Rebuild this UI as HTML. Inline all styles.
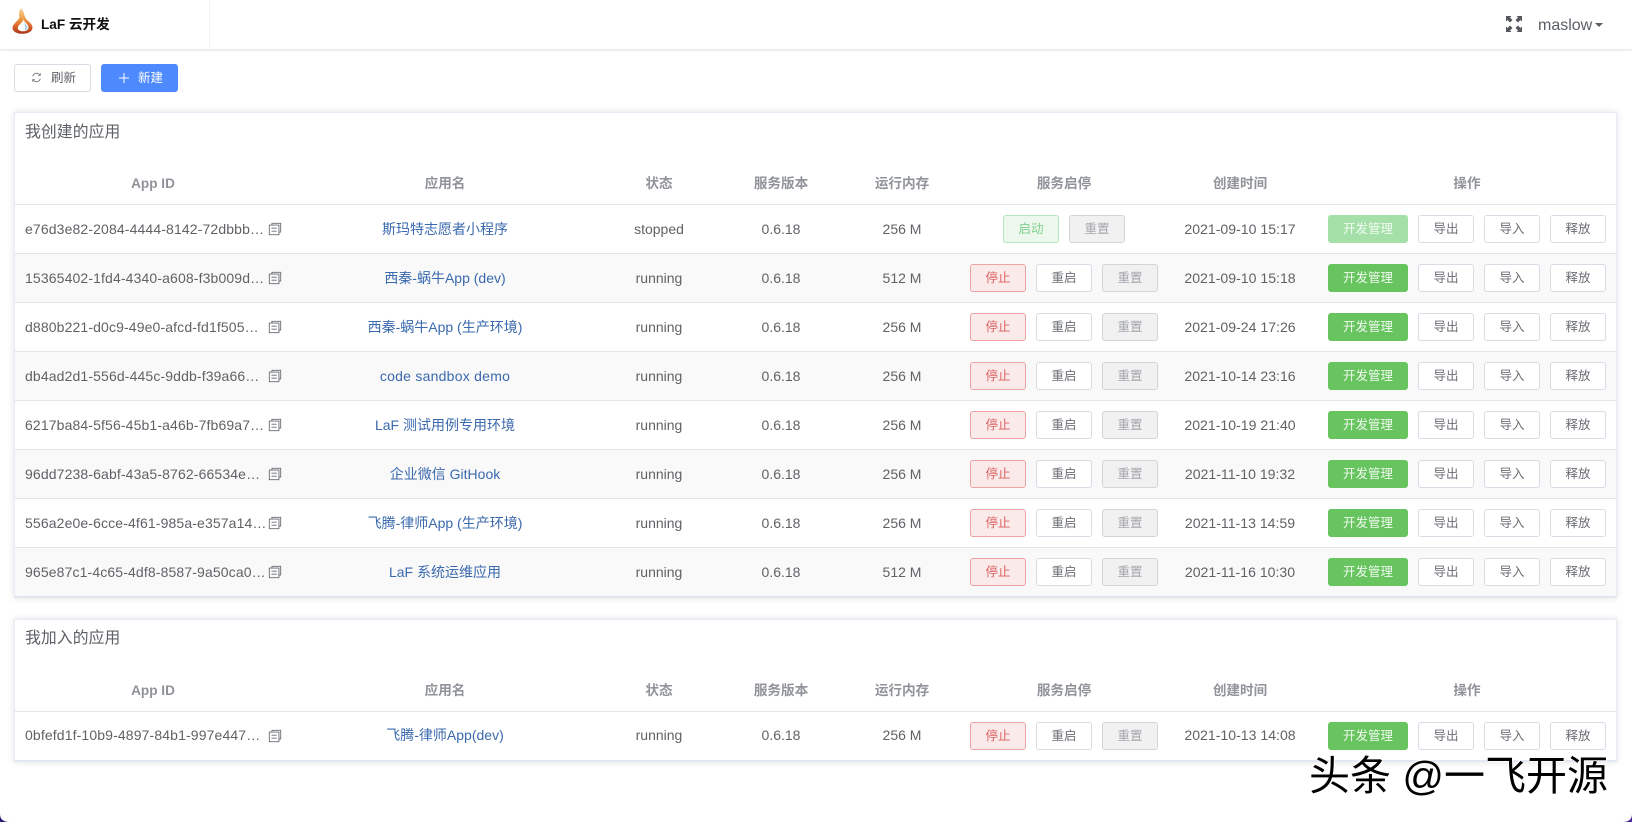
<!DOCTYPE html>
<html lang="zh"><head><meta charset="utf-8"><title>LaF 云开发</title>
<style>
html,body{margin:0;padding:0;width:1632px;height:822px;overflow:hidden;background:#fff}
body{position:relative;font-family:"Liberation Sans","Noto Sans CJK SC",sans-serif;color:#606266;font-size:14px}
.abs{position:absolute}
.nav{position:absolute;left:0;top:0;width:1632px;height:49px;background:#fff;box-shadow:0 1px 3px rgba(0,21,41,.14)}
.card{position:absolute;left:14px;width:1603px;box-sizing:border-box;background:#fff;border:1px solid #e6ebf5;border-bottom:2px solid #e2e7f2;box-shadow:0 0 7px rgba(0,0,0,.12)}
.title{position:absolute;left:25px;font-size:15.8px;line-height:24px;color:#5c6066;letter-spacing:.1px}
.h{position:absolute;left:15px;width:1601px;height:49px;box-sizing:border-box;border-bottom:1px solid #dfe6ec;background:#fff}
.h span{position:absolute;top:4px;line-height:48px;text-align:center;font-weight:bold;color:#909399;font-size:13.6px}
.r{position:absolute;left:15px;width:1601px;height:49px;box-sizing:border-box;border-bottom:1px solid #dfe6ec;background:#fff}
.r.z{background:#f9f9f9}
.r.l .c{line-height:47px}
.c{position:absolute;top:0;line-height:48px;text-align:center;white-space:nowrap;font-size:14px;color:#606266}
.n{left:280px;width:300px}.st{left:594px;width:100px}.v{left:716px;width:100px}.ram{left:837px;width:100px}.t{left:1145px;width:160px;font-size:14.1px}
.c.id{left:10px;text-align:left;font-size:14px;letter-spacing:.13px}
.c.n{color:#3a69ae}
.cp{position:absolute;left:253px;top:17px;width:14px;height:14px}
.b{position:absolute;top:10px;width:56px;height:28px;box-sizing:border-box;border:1px solid #d8dce5;border-radius:3px;background:#fff;text-align:center;line-height:26px;font-size:12.5px;color:#6b6e74}
.s1{left:955px;background:#faeaea;border-color:#eba3a3;color:#dd6060}
.s2{left:1021px}
.s3{left:1087px;background:#f1f1f2;border-color:#d3d4d6;color:#a4a6ab}
.go{left:988px;background:#ecf8ee;border-color:#b4e5bb;color:#7fcf8b}
.rs{left:1054px;background:#f1f1f2;border-color:#d3d4d6;color:#a4a6ab}
.m{left:1313px;width:80px;background:#67c45f;border-color:#67c45f;color:#eef9ee}
.m.d{background:#a5e0a9;border-color:#a5e0a9;color:#f2fbf2}
.e1{left:1403px}.e2{left:1469px}.e3{left:1535px}
.top{position:absolute;top:64px;width:77px;height:28px;box-sizing:border-box;border-radius:3px;font-size:12.5px;line-height:26px}
.wm{position:absolute;left:1309px;top:751px;font-size:41px;line-height:50px;color:#000;white-space:nowrap;font-family:"Liberation Sans","Noto Sans CJK SC",sans-serif;text-shadow:1px 1px 0 #fff,-1px -1px 0 #fff}
</style></head><body>

<div class="nav"></div>
<div class="abs" style="left:209px;top:0;width:1px;height:48px;background:#f2f2f2"></div>
<svg class="abs" style="left:11px;top:7px" width="24" height="28" viewBox="0 0 24 28">
<defs><linearGradient id="fl" x1="0" y1="0" x2="0" y2="1"><stop offset="0" stop-color="#f7d9a0"/><stop offset=".4" stop-color="#eda04a"/><stop offset=".7" stop-color="#d9652a"/><stop offset="1" stop-color="#a8351c"/></linearGradient></defs>
<path d="M10 1C8 4 7.500 7 8.500 10 7.500 14 1.500 16.500 1.500 21 1.500 24.500 6 26.800 11 26.800 17 26.800 21.500 24.500 21.500 20.500 21.500 16 15.500 14 14 10 13 6.500 12.500 4 10 1Z" fill="url(#fl)"/>
<path d="M12.500 12.500C13 15 17.500 17 17.500 20.500 17.500 23 15 24.300 12 24.300 9 24.300 6.800 23 6.800 21 6.800 18 11.500 16 12.500 12.500Z" fill="#fff"/>
<path d="M13.500 15.500C15 17 16.500 19 16.500 20.800 16.500 22.500 15 23.500 13.500 23.300 14.800 21 13.500 18 13.500 15.500Z" fill="#a9d4ec"/>
</svg>
<div class="abs" style="left:41px;top:14px;font-size:13.6px;line-height:22px;font-weight:bold;color:#111">LaF 云开发</div>

<svg class="abs" style="left:1506px;top:16px" width="16" height="16" viewBox="0 0 16 16" fill="#55585f">
<path d="M0 0h5.500L4 1.500 6.500 4 4 6.500 1.500 4 0 5.500zM16 0v5.500L14.500 4 12 6.500 9.500 4 12 1.500 10.500 0zM0 16v-5.500L1.500 12 4 9.500 6.500 12 4 14.500 5.500 16zM16 16h-5.500L12 14.500 9.500 12 12 9.500 14.500 12 16 10.500z"/>
</svg>
<div class="abs" style="left:1538px;top:14px;font-size:16px;line-height:24px;color:#5a5e66">maslow</div>
<div class="abs" style="left:1595px;top:23px;width:0;height:0;border-left:4px solid transparent;border-right:4px solid transparent;border-top:4px solid #5a5e66"></div>

<div class="top" style="left:14px;background:#fff;border:1px solid #d8dce5;color:#606266">
<svg class="abs" style="left:16px;top:7px" width="11" height="11" viewBox="0 0 13 13" fill="none" stroke="#6b6e74" stroke-width="1"><path d="M2 5a4.700 4.700 0 0 1 8-2l1 1M11 8a4.700 4.700 0 0 1-8 2L2 9"/><path d="M11 1.500V4H8.500M2 11.500V9h2.500" stroke-width=".9"/></svg>
<span class="abs" style="left:36px;top:0;font-size:12.5px">刷新</span></div>
<div class="top" style="left:101px;background:#4e8afd;border:1px solid #4e8afd;color:#fff">
<svg class="abs" style="left:16px;top:7px" width="12" height="12" viewBox="0 0 12 12" stroke="#fff" stroke-width="1"><path d="M6 1v10M1 6h10"/></svg>
<span class="abs" style="left:36px;top:0;font-size:12.5px">新建</span></div>

<div class="card" style="top:112px;height:486px"></div>
<div class="title" style="top:121px">我创建的应用</div>
<div class="h" style="top:156px">
<span style="left:0;width:276px">App ID</span><span style="left:280px;width:300px">应用名</span><span style="left:594px;width:100px">状态</span><span style="left:716px;width:100px">服务版本</span><span style="left:837px;width:100px">运行内存</span><span style="left:979px;width:140px">服务启停</span><span style="left:1145px;width:160px">创建时间</span><span style="left:1352px;width:200px">操作</span>
</div>

<div class="r" style="top:205px"><div class="c id">e76d3e82-2084-4444-8142-72dbbb…</div><svg class="cp" viewBox="0 0 16 16" fill="none" stroke="#666a70"><path d="M4.500 3.500V1.500h10v10h-2M1.500 3.500h11v11h-11zM4 7h6M4 10.500h6"/></svg><div class="c n">斯玛特志愿者小程序</div><div class="c st">stopped</div><div class="c v">0.6.18</div><div class="c ram">256 M</div><div class="b go">启动</div><div class="b rs">重置</div><div class="c t">2021-09-10 15:17</div><div class="b m d">开发管理</div><div class="b e1">导出</div><div class="b e2">导入</div><div class="b e3">释放</div></div>

<div class="r z" style="top:254px"><div class="c id">15365402-1fd4-4340-a608-f3b009d…</div><svg class="cp" viewBox="0 0 16 16" fill="none" stroke="#666a70"><path d="M4.500 3.500V1.500h10v10h-2M1.500 3.500h11v11h-11zM4 7h6M4 10.500h6"/></svg><div class="c n">西秦-蜗牛App (dev)</div><div class="c st">running</div><div class="c v">0.6.18</div><div class="c ram">512 M</div><div class="b s1">停止</div><div class="b s2">重启</div><div class="b s3">重置</div><div class="c t">2021-09-10 15:18</div><div class="b m">开发管理</div><div class="b e1">导出</div><div class="b e2">导入</div><div class="b e3">释放</div></div>

<div class="r" style="top:303px"><div class="c id">d880b221-d0c9-49e0-afcd-fd1f505…</div><svg class="cp" viewBox="0 0 16 16" fill="none" stroke="#666a70"><path d="M4.500 3.500V1.500h10v10h-2M1.500 3.500h11v11h-11zM4 7h6M4 10.500h6"/></svg><div class="c n">西秦-蜗牛App (生产环境)</div><div class="c st">running</div><div class="c v">0.6.18</div><div class="c ram">256 M</div><div class="b s1">停止</div><div class="b s2">重启</div><div class="b s3">重置</div><div class="c t">2021-09-24 17:26</div><div class="b m">开发管理</div><div class="b e1">导出</div><div class="b e2">导入</div><div class="b e3">释放</div></div>

<div class="r z" style="top:352px"><div class="c id">db4ad2d1-556d-445c-9ddb-f39a66…</div><svg class="cp" viewBox="0 0 16 16" fill="none" stroke="#666a70"><path d="M4.500 3.500V1.500h10v10h-2M1.500 3.500h11v11h-11zM4 7h6M4 10.500h6"/></svg><div class="c n" style="letter-spacing:.25px">code sandbox demo</div><div class="c st">running</div><div class="c v">0.6.18</div><div class="c ram">256 M</div><div class="b s1">停止</div><div class="b s2">重启</div><div class="b s3">重置</div><div class="c t">2021-10-14 23:16</div><div class="b m">开发管理</div><div class="b e1">导出</div><div class="b e2">导入</div><div class="b e3">释放</div></div>

<div class="r" style="top:401px"><div class="c id">6217ba84-5f56-45b1-a46b-7fb69a7…</div><svg class="cp" viewBox="0 0 16 16" fill="none" stroke="#666a70"><path d="M4.500 3.500V1.500h10v10h-2M1.500 3.500h11v11h-11zM4 7h6M4 10.500h6"/></svg><div class="c n">LaF 测试用例专用环境</div><div class="c st">running</div><div class="c v">0.6.18</div><div class="c ram">256 M</div><div class="b s1">停止</div><div class="b s2">重启</div><div class="b s3">重置</div><div class="c t">2021-10-19 21:40</div><div class="b m">开发管理</div><div class="b e1">导出</div><div class="b e2">导入</div><div class="b e3">释放</div></div>

<div class="r z" style="top:450px"><div class="c id">96dd7238-6abf-43a5-8762-66534e…</div><svg class="cp" viewBox="0 0 16 16" fill="none" stroke="#666a70"><path d="M4.500 3.500V1.500h10v10h-2M1.500 3.500h11v11h-11zM4 7h6M4 10.500h6"/></svg><div class="c n">企业微信 GitHook</div><div class="c st">running</div><div class="c v">0.6.18</div><div class="c ram">256 M</div><div class="b s1">停止</div><div class="b s2">重启</div><div class="b s3">重置</div><div class="c t">2021-11-10 19:32</div><div class="b m">开发管理</div><div class="b e1">导出</div><div class="b e2">导入</div><div class="b e3">释放</div></div>

<div class="r" style="top:499px"><div class="c id">556a2e0e-6cce-4f61-985a-e357a14…</div><svg class="cp" viewBox="0 0 16 16" fill="none" stroke="#666a70"><path d="M4.500 3.500V1.500h10v10h-2M1.500 3.500h11v11h-11zM4 7h6M4 10.500h6"/></svg><div class="c n">飞腾-律师App (生产环境)</div><div class="c st">running</div><div class="c v">0.6.18</div><div class="c ram">256 M</div><div class="b s1">停止</div><div class="b s2">重启</div><div class="b s3">重置</div><div class="c t">2021-11-13 14:59</div><div class="b m">开发管理</div><div class="b e1">导出</div><div class="b e2">导入</div><div class="b e3">释放</div></div>

<div class="r z" style="top:548px"><div class="c id">965e87c1-4c65-4df8-8587-9a50ca0…</div><svg class="cp" viewBox="0 0 16 16" fill="none" stroke="#666a70"><path d="M4.500 3.500V1.500h10v10h-2M1.500 3.500h11v11h-11zM4 7h6M4 10.500h6"/></svg><div class="c n">LaF 系统运维应用</div><div class="c st">running</div><div class="c v">0.6.18</div><div class="c ram">512 M</div><div class="b s1">停止</div><div class="b s2">重启</div><div class="b s3">重置</div><div class="c t">2021-11-16 10:30</div><div class="b m">开发管理</div><div class="b e1">导出</div><div class="b e2">导入</div><div class="b e3">释放</div></div>

<div class="card" style="top:619px;height:143px"></div>
<div class="title" style="top:627px">我加入的应用</div>
<div class="h" style="top:663px">
<span style="left:0;width:276px">App ID</span><span style="left:280px;width:300px">应用名</span><span style="left:594px;width:100px">状态</span><span style="left:716px;width:100px">服务版本</span><span style="left:837px;width:100px">运行内存</span><span style="left:979px;width:140px">服务启停</span><span style="left:1145px;width:160px">创建时间</span><span style="left:1352px;width:200px">操作</span>
</div>
<div class="r l" style="top:712px;height:48px;border-bottom:0"><div class="c id">0bfefd1f-10b9-4897-84b1-997e447…</div><svg class="cp" viewBox="0 0 16 16" fill="none" stroke="#666a70"><path d="M4.500 3.500V1.500h10v10h-2M1.500 3.500h11v11h-11zM4 7h6M4 10.500h6"/></svg><div class="c n">飞腾-律师App(dev)</div><div class="c st">running</div><div class="c v">0.6.18</div><div class="c ram">256 M</div><div class="b s1">停止</div><div class="b s2">重启</div><div class="b s3">重置</div><div class="c t">2021-10-13 14:08</div><div class="b m">开发管理</div><div class="b e1">导出</div><div class="b e2">导入</div><div class="b e3">释放</div></div>

<div class="wm">头条 @一飞开源</div>

<svg class="abs" style="left:0;top:814px" width="10" height="8"><path d="M0 0C0 5 3 8 10 8H0Z" fill="#2a1a78"/></svg>
<svg class="abs" style="left:1622px;top:814px" width="10" height="8"><path d="M10 0C10 5 7 8 0 8H10Z" fill="#4a2a9a"/></svg>
</body></html>
